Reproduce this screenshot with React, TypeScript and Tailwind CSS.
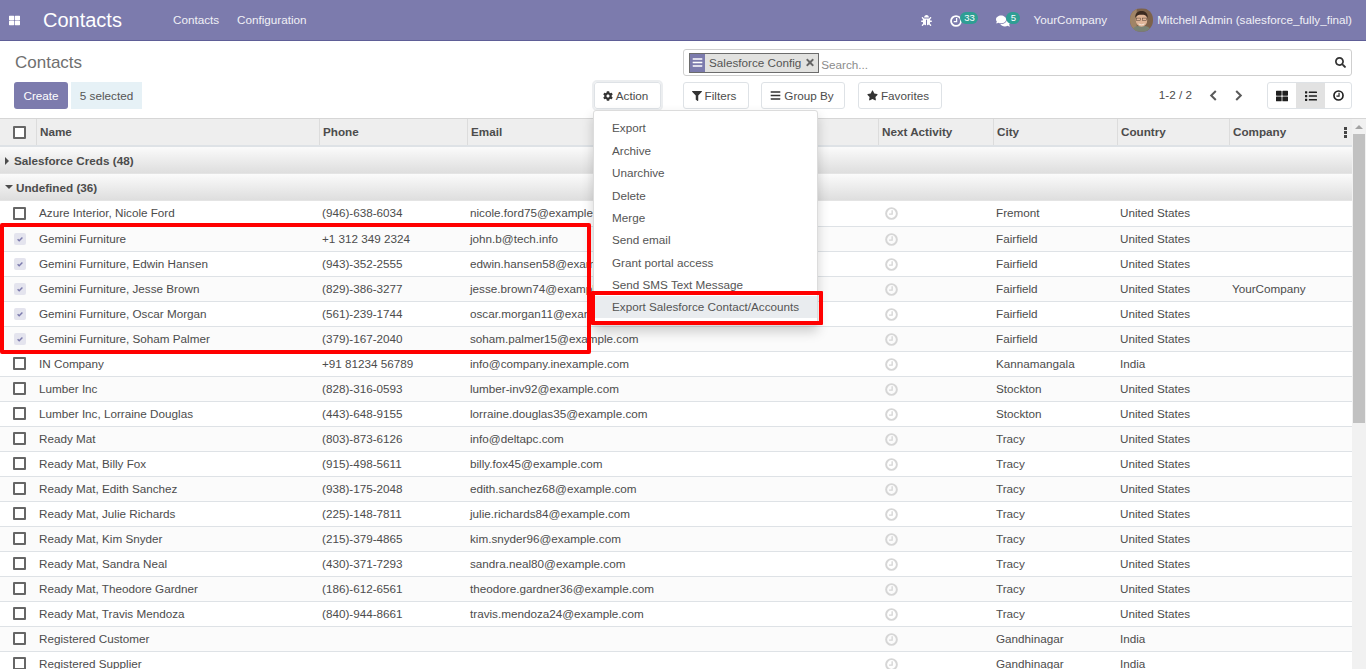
import React from "react";
import {
  FaBars,
  FaBug,
  FaCog,
  FaComments,
  FaFilter,
  FaList,
  FaSearch,
  FaStar,
  FaThLarge,
  FaTimes,
} from "react-icons/fa";

type Row = {
  name: string;
  phone: string;
  email: string;
  city: string;
  country: string;
  company?: string;
  checked?: boolean;
};

const rows: Row[] = [
  { name: "Azure Interior, Nicole Ford", phone: "(946)-638-6034", email: "nicole.ford75@example.com", city: "Fremont", country: "United States" },
  { name: "Gemini Furniture", phone: "+1 312 349 2324", email: "john.b@tech.info", city: "Fairfield", country: "United States", checked: true },
  { name: "Gemini Furniture, Edwin Hansen", phone: "(943)-352-2555", email: "edwin.hansen58@example.com", city: "Fairfield", country: "United States", checked: true },
  { name: "Gemini Furniture, Jesse Brown", phone: "(829)-386-3277", email: "jesse.brown74@example.com", city: "Fairfield", country: "United States", company: "YourCompany", checked: true },
  { name: "Gemini Furniture, Oscar Morgan", phone: "(561)-239-1744", email: "oscar.morgan11@example.com", city: "Fairfield", country: "United States", checked: true },
  { name: "Gemini Furniture, Soham Palmer", phone: "(379)-167-2040", email: "soham.palmer15@example.com", city: "Fairfield", country: "United States", checked: true },
  { name: "IN Company", phone: "+91 81234 56789", email: "info@company.inexample.com", city: "Kannamangala", country: "India" },
  { name: "Lumber Inc", phone: "(828)-316-0593", email: "lumber-inv92@example.com", city: "Stockton", country: "United States" },
  { name: "Lumber Inc, Lorraine Douglas", phone: "(443)-648-9155", email: "lorraine.douglas35@example.com", city: "Stockton", country: "United States" },
  { name: "Ready Mat", phone: "(803)-873-6126", email: "info@deltapc.com", city: "Tracy", country: "United States" },
  { name: "Ready Mat, Billy Fox", phone: "(915)-498-5611", email: "billy.fox45@example.com", city: "Tracy", country: "United States" },
  { name: "Ready Mat, Edith Sanchez", phone: "(938)-175-2048", email: "edith.sanchez68@example.com", city: "Tracy", country: "United States" },
  { name: "Ready Mat, Julie Richards", phone: "(225)-148-7811", email: "julie.richards84@example.com", city: "Tracy", country: "United States" },
  { name: "Ready Mat, Kim Snyder", phone: "(215)-379-4865", email: "kim.snyder96@example.com", city: "Tracy", country: "United States" },
  { name: "Ready Mat, Sandra Neal", phone: "(430)-371-7293", email: "sandra.neal80@example.com", city: "Tracy", country: "United States" },
  { name: "Ready Mat, Theodore Gardner", phone: "(186)-612-6561", email: "theodore.gardner36@example.com", city: "Tracy", country: "United States" },
  { name: "Ready Mat, Travis Mendoza", phone: "(840)-944-8661", email: "travis.mendoza24@example.com", city: "Tracy", country: "United States" },
  { name: "Registered Customer", phone: "", email: "", city: "Gandhinagar", country: "India" },
  { name: "Registered Supplier", phone: "", email: "", city: "Gandhinagar", country: "India" },
];

const actions = [
  "Export",
  "Archive",
  "Unarchive",
  "Delete",
  "Merge",
  "Send email",
  "Grant portal access",
  "Send SMS Text Message",
];

// fa-clock-o style: thick ring with hands going up and to the left
function ClockIcon({ className }: { className?: string }) {
  return (
    <svg viewBox="0 0 16 16" className={className} fill="none" stroke="currentColor">
      <circle cx="8" cy="8" r="6.6" strokeWidth="2.4" />
      <path d="M8.8 4V8.8H5" strokeWidth="1.7" />
    </svg>
  );
}

function Chevron({ right }: { right?: boolean }) {
  return (
    <svg viewBox="0 0 9 12" className="w-[9px] h-[11px]" fill="none" stroke="#5a5a5a" strokeWidth="2.2">
      <path d={right ? "M2 1l5 5-5 5" : "M7 1L2 6l5 5"} />
    </svg>
  );
}

function Avatar() {
  return (
    <svg viewBox="0 0 24 24" className="w-[23px] h-[24px] rounded-full">
      <rect width="24" height="24" fill="#7d624a" />
      <rect x="0" y="0" width="7" height="24" fill="#a08466" />
      <path d="M2 24c1-5 5-6 10-6s9 1 10 6z" fill="#7a8273" />
      <ellipse cx="12" cy="12" rx="6" ry="7" fill="#deb497" />
      <path d="M5.5 10C5 4 9 2.5 12 2.5S19 4 18.5 10C17 7 15 6.5 12 6.5S7 7 5.5 10z" fill="#3a2a20" />
      <rect x="7" y="10" width="4.2" height="2.6" fill="none" stroke="#4a3a30" strokeWidth="0.5" />
      <rect x="12.8" y="10" width="4.2" height="2.6" fill="none" stroke="#4a3a30" strokeWidth="0.5" />
      <path d="M9 16c2 1.4 4 1.4 6 0" stroke="#f4ebe2" strokeWidth="1" fill="none" />
    </svg>
  );
}

function Checkbox() {
  return <span className="block w-[13px] h-[13px] bg-white border-2 border-[#666] rounded-[1px] box-border" />;
}

function CheckedBox() {
  return (
    <span className="flex items-center justify-center w-[12px] h-[12px] bg-[#e4e4ee] rounded-[2px]">
      <svg viewBox="0 0 10 10" className="w-[8px] h-[8px]" fill="none" stroke="#7c7bad" strokeWidth="1.8">
        <path d="M2 5.2l2 2L8 3" />
      </svg>
    </span>
  );
}

function GroupRow({ label, open }: { label: string; open?: boolean }) {
  return (
    <tr className="h-[27px] bg-gradient-to-b from-[#fcfcfc] to-[#dedede]">
      <td colSpan={9} className="pl-[5px] pt-[2px] font-bold text-[#4c4c4c] border-b border-[#e4e4e4]">
        {open ? (
          <span className="flex items-center gap-[3px]">
            <span className="w-0 h-0 border-x-[4px] border-x-transparent border-t-[4px] border-t-[#4c4c4c]" />
            {label}
          </span>
        ) : (
          <span className="flex items-center gap-[5px]">
            <span className="w-0 h-0 border-y-[4px] border-y-transparent border-l-[4px] border-l-[#4c4c4c]" />
            {label}
          </span>
        )}
      </td>
    </tr>
  );
}

const headers = ["Name", "Phone", "Email", "Salesperson", "Next Activity", "City", "Country", "Company"];

const toolBtn = "h-[27px] flex items-center justify-center gap-[3px] bg-white border border-[#dee2e6] rounded-[3px] text-[#4c4c4c]";

export default function App() {
  return (
    <div className="h-[669px] w-[1366px] overflow-hidden flex flex-col bg-white text-[11.7px] text-[#4c4c4c] font-['Liberation_Sans',Arial,sans-serif]">
      {/* Navbar */}
      <div className="h-[41px] shrink-0 flex items-center bg-[#7c7bad] border-b border-[#5f5e97] text-white">
        <FaThLarge className="ml-[9px] w-[11px] h-[11px]" />
        <span className="ml-[23px] text-[20px] leading-none">Contacts</span>
        <span className="ml-[51px] text-[#f0f0f6]">Contacts</span>
        <span className="ml-[18px] text-[#f0f0f6]">Configuration</span>
        <div className="ml-auto flex items-center">
          <FaBug className="w-[11px] h-[11px]" />
          <span className="relative ml-[18px] w-[34px] h-[20px] flex items-center">
            <ClockIcon className="w-[12px] h-[12px] mt-[1px]" />
            <span className="absolute left-[10px] top-[2px] w-[18px] h-[12px] text-center rounded-full bg-[#2f9e94] text-[9.5px] leading-[12px]">33</span>
          </span>
          <span className="relative ml-[12px] w-[26px] h-[20px] flex items-center">
            <FaComments className="w-[14px] h-[14px] mt-[1px]" />
            <span className="absolute left-[10px] top-[2px] w-[14px] h-[12px] text-center rounded-full bg-[#2f9e94] text-[9.5px] leading-[12px]">5</span>
          </span>
          <span className="ml-[11px] text-[#f0f0f6]">YourCompany</span>
          <span className="ml-[23px]"><Avatar /></span>
          <span className="ml-[4px] mr-[14px] text-[#f0f0f6]">Mitchell Admin (salesforce_fully_final)</span>
        </div>
      </div>

      {/* Control panel */}
      <div className="h-[78px] shrink-0 flex flex-col border-b border-[#d6d6d6] px-[14px]">
        <div className="h-[41px] shrink-0 flex items-end justify-between">
          <span className="text-[17px] leading-[23px] mb-[8px] ml-[1px] text-[#6f6f6f]">Contacts</span>
          <div className="w-[669px] h-[27px] mb-[6px] flex items-center border border-[#cfcfcf] rounded-[3px] pl-[5px] pr-[5px]">
            <span className="flex items-center h-[20px] border border-[#6c6c6c] bg-[#e2e2e0]">
              <span className="w-[15px] h-full flex items-center justify-center bg-[#7c7bad] text-white">
                <FaBars className="w-[11px] h-[11px]" />
              </span>
              <span className="pl-[4px] pr-[4px] text-[#555]">Salesforce Config</span>
              <FaTimes className="w-[10px] h-[11px] mr-[3px] text-[#666]" />
            </span>
            <span className="ml-[2px] mt-[5px] text-[#8c8c8c]">Search...</span>
            <FaSearch className="ml-auto w-[11px] h-[11px] text-[#333]" />
          </div>
        </div>
        <div className="h-[27px] shrink-0 flex items-center">
          <button className="h-[27px] w-[54px] bg-[#7c7bad] rounded-[3px] text-white">Create</button>
          <span className="ml-[3px] h-[27px] w-[71px] flex items-center justify-center bg-[#e6f1f6] text-[#555]">5 selected</span>
          <button className={toolBtn + " ml-[452px] w-[67px] pr-[4px] outline-[2px] outline-[#eceef0] outline"}>
            <FaCog className="w-[10px] h-[10px] text-[#333]" />
            Action
          </button>
          <button className={toolBtn + " ml-[22px] w-[66px] pr-[4px]"}>
            <FaFilter className="w-[10px] h-[10px] text-[#333]" />
            Filters
          </button>
          <button className={toolBtn + " ml-[12px] w-[84px] pr-[2px]"}>
            <FaBars className="w-[11px] h-[11px] text-[#333]" />
            Group By
          </button>
          <button className={toolBtn + " ml-[13px] w-[84px] pr-[4px]"}>
            <FaStar className="w-[11px] h-[11px] text-[#333]" />
            Favorites
          </button>
          <span className="ml-auto mb-[1px]">1-2 / 2</span>
          <span className="ml-[17px] mb-[1px] flex"><Chevron /></span>
          <span className="ml-[16px] mb-[1px] flex"><Chevron right /></span>
          <div className="ml-[24px] flex h-[27px] border border-[#dee2e6] rounded-[3px] text-[#1f1f1f]">
            <span className="w-[28px] flex items-center justify-center"><FaThLarge className="w-[12px] h-[12px]" /></span>
            <span className="w-[29px] flex items-center justify-center bg-[#e2e2e2]"><FaList className="w-[12px] h-[12px]" /></span>
            <span className="w-[26px] flex items-center justify-center"><ClockIcon className="w-[11px] h-[11px]" /></span>
          </div>
        </div>
      </div>

      {/* List */}
      <div className="relative flex-1 min-h-0 flex">
        <div className="w-[1352px] shrink-0">
          <table className="w-[1352px] table-fixed border-collapse">
            <colgroup>
              <col className="w-[36px]" />
              <col className="w-[283px]" />
              <col className="w-[148px]" />
              <col className="w-[276px]" />
              <col className="w-[135px]" />
              <col className="w-[115px]" />
              <col className="w-[124px]" />
              <col className="w-[112px]" />
              <col className="w-[123px]" />
            </colgroup>
            <thead>
              <tr className="h-[27px] bg-[#eeeeee] border-b-2 border-[#dee2e6]">
                <th className="border-r border-[#dcdcdc] pl-[13px]"><Checkbox /></th>
                {headers.map((h, i) => (
                  <th key={h} className={"relative text-left font-bold pl-[3.5px] text-[#4c4c4c] " + (i < headers.length - 1 ? "border-r border-[#dcdcdc]" : "")}>
                    {h}
                    {h === "Company" && (
                      <span className="absolute right-[5px] top-[8px] flex flex-col gap-[1px]">
                        <span className="block w-[3px] h-[3px] bg-[#444]" />
                        <span className="block w-[3px] h-[3px] bg-[#444]" />
                        <span className="block w-[3px] h-[3px] bg-[#444]" />
                      </span>
                    )}
                  </th>
                ))}
              </tr>
            </thead>
            <tbody>
              <GroupRow label="Salesforce Creds (48)" />
              <GroupRow label="Undefined (36)" open />
              {rows.map((r, i) => (
                <tr key={r.name} className={"border-b border-[#dee2e6] " + (i === 0 ? "h-[26px]" : "h-[25px]") + (i % 2 ? " bg-[#fbfbfb]" : " bg-white")}>
                  <td className="pl-[13px]">{r.checked ? <span className="block pl-px"><CheckedBox /></span> : <Checkbox />}</td>
                  <td className={"pl-[3px] whitespace-nowrap overflow-hidden " + (i === 0 ? "" : "pt-[1px]")}>{r.name}</td>
                  <td className={"pl-[3px] whitespace-nowrap overflow-hidden " + (i === 0 ? "" : "pt-[1px]")}>{r.phone}</td>
                  <td className={"pl-[3px] whitespace-nowrap overflow-hidden " + (i === 0 ? "" : "pt-[1px]")}>{r.email}</td>
                  <td />
                  <td className="pl-[7px] pt-[1px]"><ClockIcon className="w-[13px] h-[13px] text-[#d6d6d6]" /></td>
                  <td className={"pl-[3px] whitespace-nowrap overflow-hidden " + (i === 0 ? "" : "pt-[1px]")}>{r.city}</td>
                  <td className={"pl-[3px] whitespace-nowrap overflow-hidden " + (i === 0 ? "" : "pt-[1px]")}>{r.country}</td>
                  <td className={"pl-[3px] whitespace-nowrap overflow-hidden " + (i === 0 ? "" : "pt-[1px]")}>{r.company}</td>
                </tr>
              ))}
            </tbody>
          </table>
        </div>

        {/* Scrollbar */}
        <div className="w-[14px] shrink-0 flex flex-col bg-[#f1f1f1]">
          <span className="h-[15px] flex items-center justify-center">
            <span className="w-0 h-0 border-x-[4px] border-x-transparent border-b-[4px] border-b-[#a3a3a3]" />
          </span>
          <span className="mx-[1px] h-[289px] bg-[#c1c1c1]" />
        </div>

        {/* Action dropdown */}
        <div className="absolute left-[593px] top-[-9px] w-[225px] h-[216px] bg-white border border-[#dcdcdc] rounded-[3px] shadow-[0_6px_12px_rgba(0,0,0,0.18)] pt-[6px] text-[#555]">
          {actions.map((a) => (
            <div key={a} className="h-[22.4px] pl-[18px] flex items-center whitespace-nowrap">{a}</div>
          ))}
          <div className="h-[22px] pl-[18px] flex items-center bg-[#e9ecef] whitespace-nowrap">Export Salesforce Contact/Accounts</div>
        </div>

        {/* Red annotation boxes */}
        <div className="absolute left-0 top-[104px] w-[591px] h-[131px] border-[4px] border-[#ff0000] rounded-[2px]" />
        <div className="absolute left-[591px] top-[172px] w-[232px] h-[34px] border-[4px] border-[#ff0000] rounded-[1px]" />
      </div>
    </div>
  );
}
